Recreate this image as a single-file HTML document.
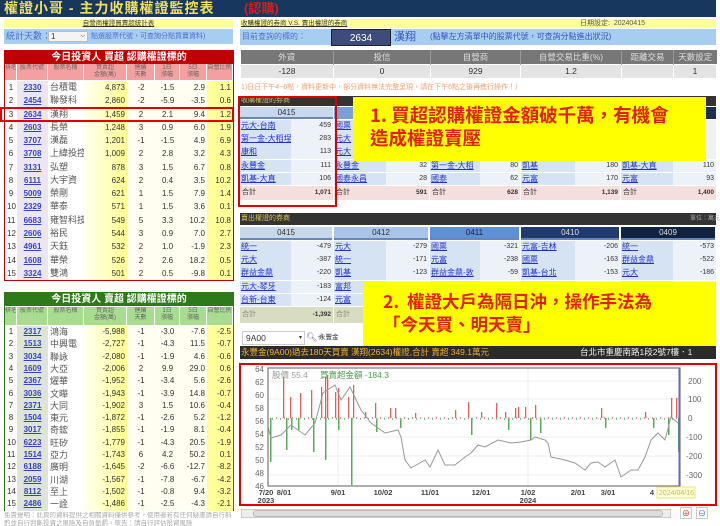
<!DOCTYPE html>
<html><head><meta charset="utf-8">
<style>
*{margin:0;padding:0;box-sizing:border-box}
body{width:720px;height:526px;overflow:hidden;background:#fff;font-family:"Liberation Sans","Noto Sans CJK TC",sans-serif;font-size:8px;color:#333;position:relative}
.a{position:absolute}
.cell{position:absolute;overflow:hidden;white-space:nowrap;font-size:8px;padding:0 2px}
table{border-collapse:collapse;table-layout:fixed}
td{padding:0 2px;white-space:nowrap;overflow:hidden;line-height:12px}
</style></head><body>

<div class="a" style="left:0;top:0;width:716px;height:17px;background:#17375e"></div>
<div class="a" style="left:4px;top:0;font-size:14px;line-height:17px;color:#f0e060;font-weight:bold;letter-spacing:1px">權證小哥 - 主力收購權證監控表</div>
<div class="a" style="left:244px;top:0;font-size:13px;line-height:17px;color:#d02020;font-weight:bold">(認購)</div>

<div class="a" style="left:4px;top:19px;width:229px;height:9px;background:#ffff99;font-size:6.5px;line-height:9px;text-align:center;color:#333;text-decoration:underline">自營商權證買賣超統計表</div>
<div class="a" style="left:4px;top:29px;width:229px;height:15px;background:#a7cef0"></div>
<div class="a" style="left:6px;top:30px;font-size:9px;color:#4a6fd0;line-height:13px">統計天數：</div>
<div class="a" style="left:48px;top:31px;width:40px;height:11px;background:#f4f4f4;border:1px solid #bbb;font-size:8px;line-height:9px;padding-left:2px">1<span style="float:right;padding-right:2px;font-size:6px">⌵</span></div>
<div class="a" style="left:91px;top:31px;font-size:7px;color:#4a6fd0;line-height:11px">點選股票代號，可查詢分點買賣資料)</div>

<div class="a" style="left:4px;top:50px;width:230px;height:231px;border:1px solid #c00000;background:#fff"></div>
<div class="a" style="left:5px;top:51px;width:228px;height:13px;background:#c00000;color:#fff;font-size:10px;line-height:13px;text-align:center;font-weight:bold">今日投資人 買超 認購權證標的</div>
<div id="rt"></div>
<div class="a" style="left:0;top:107px;width:234px;height:15px;border:2px solid #e00000"></div>

<div class="a" style="left:4px;top:292px;width:230px;height:219px;border:1px solid #2e7a1a;background:#fff"></div>
<div class="a" style="left:5px;top:293px;width:228px;height:13px;background:#2e7a1a;color:#fff;font-size:10px;line-height:13px;text-align:center;font-weight:bold">今日投資人 賣超 認購權證標的</div>
<div id="gt"></div>
<div class="a" style="left:4px;top:512px;width:230px;height:14px;overflow:hidden;font-size:6.5px;line-height:7.5px;color:#aaa">免責聲明：此頁的資料提供之相關資料僅供參考，使用者若有任何疑慮請自行斟酌並自行判斷投資之風險及自負盈虧，敬告：請自行評估投資風險</div>

<div class="a" style="left:240px;top:19px;width:476px;height:9px;background:#ffff99"></div>
<div class="a" style="left:241px;top:19px;font-size:6.5px;line-height:9px;text-decoration:underline;color:#333">收購權證的券商 V.S. 賣出權證的券商</div>
<div class="a" style="left:580px;top:19px;font-size:7px;line-height:9px;color:#555">日期設定:&nbsp; 20240415</div>
<div class="a" style="left:240px;top:29px;width:476px;height:16px;background:#a7cef0"></div>
<div class="a" style="left:242px;top:30px;font-size:8px;line-height:13px;color:#4a6fd0">目前查詢的標的：</div>
<div class="a" style="left:331px;top:29px;width:60px;height:17px;background:#3d4c7a;color:#fff;font-size:10px;line-height:17px;text-align:center;border:1px solid #222">2634</div>
<div class="a" style="left:394px;top:29px;font-size:11px;line-height:16px;color:#3355bb">漢翔</div>
<div class="a" style="left:430px;top:30px;font-size:8px;line-height:14px;color:#3355bb">(點擊左方清單中的股票代號，可查詢分點進出狀況)</div>

<table class="a" style="left:240px;top:50px;width:476px;font-size:8.5px;text-align:center">
<colgroup><col style="width:93px"><col style="width:97px"><col style="width:90px"><col style="width:101px"><col style="width:52px"><col style="width:43px"></colgroup>
<tr style="background:#777;color:#ddd"><td style="height:14px;text-align:center;border-right:1px solid #999">外資</td><td style="text-align:center;border-right:1px solid #999">投信</td><td style="text-align:center;border-right:1px solid #999">自營商</td><td style="text-align:center;border-right:1px solid #999">自營交易比重(%)</td><td style="text-align:center;border-right:1px solid #999">距離交易</td><td style="text-align:center">天數設定</td></tr>
<tr style="background:#e4e4e4;color:#333"><td style="height:14px;text-align:center;border:1px solid #fff">-128</td><td style="text-align:center;border:1px solid #fff">0</td><td style="text-align:center;border:1px solid #fff">929</td><td style="text-align:center;border:1px solid #fff">1.2</td><td style="border:1px solid #fff"></td><td style="text-align:center;border:1px solid #fff">1</td></tr>
</table>
<div class="a" style="left:241px;top:83px;font-size:7px;color:#f0a070;line-height:9px">1)日日下午4~6點，資料更新中，部分資料無法完整呈現，請在下午6點之後再進行操作！）</div>

<div class="a" style="left:240px;top:96px;width:476px;height:10px;background:#333"></div>
<div class="a" style="left:241px;top:96px;font-size:7px;line-height:10px;color:#d8c060">收購權證的券商</div>
<div class="a" style="left:240px;top:107px;width:93px;height:12px;background:#c8d8ec;border-bottom:2px solid #6a86b8;text-align:center;font-size:8px;line-height:11px">0415</div>
<div class="a" style="left:334px;top:107px;width:382px;height:12px;background:#7aa0d8"></div>
<div class="a" style="left:700px;top:107px;width:16px;height:12px;background:#1e2e4e"></div>
<div id="buy"></div>
<div class="a" style="left:238px;top:96px;width:99px;height:111px;border:2px solid #e00000"></div>
<div class="a" style="left:353px;top:97px;width:353px;height:64px;background:#ffff00;color:#e02010;font-weight:bold;font-size:18.5px;line-height:23px;padding:7px 0 0 17px;font-family:'Noto Sans CJK TC',sans-serif">1. 買超認購權證金額破千萬，有機會<br>造成權證賣壓</div>

<div class="a" style="left:240px;top:213px;width:476px;height:12px;background:#333"></div>
<div class="a" style="left:241px;top:213px;font-size:7px;line-height:12px;color:#d8c060">賣出權證的券商</div>
<div class="a" style="left:690px;top:213px;font-size:6px;line-height:12px;color:#aaa">單位：萬元</div>
<div id="sell"></div>
<div class="a" style="left:363px;top:282px;width:353px;height:64px;background:#ffff00;color:#e02010;font-weight:bold;font-size:17.5px;line-height:23px;padding:8px 0 0 20px;font-family:'Noto Sans CJK TC',sans-serif">2.&nbsp; 權證大戶為隔日沖，操作手法為<br>「今天買、明天賣」</div>

<div class="a" style="left:242px;top:331px;width:63px;height:14px;border:1px solid #ccc;font-size:8.5px;line-height:12px;padding-left:3px;color:#333">9A00<span style="float:right;font-size:6px;padding-right:2px">▾</span></div>
<div class="a" style="left:306px;top:331px;font-size:9px;line-height:13px;color:#666">🔍︎+</div>
<div class="a" style="left:319px;top:333px;font-size:6.5px;line-height:10px;color:#333">永豐金</div>

<div class="a" style="left:240px;top:346px;width:476px;height:13px;background:#2b2b2b"></div>
<div class="a" style="left:241px;top:346px;font-size:8.5px;line-height:13px;color:#f0b030;white-space:nowrap">永豐金(9A00)過去180天買賣 漢翔(2634)權證,合計 賣超 349.1萬元</div>
<div class="a" style="left:580px;top:346px;font-size:8.5px;line-height:13px;color:#eee;white-space:nowrap;width:136px;overflow:hidden">台北市重慶南路1段2號7樓．1</div>

<div class="a" style="left:239px;top:363px;width:478px;height:143px;border:2px solid #e00000"></div>
<svg class="a" style="left:0;top:0" width="720" height="526" viewBox="0 0 720 526">
<g stroke="#ececec" stroke-width="1">
<line x1="268" y1="381" x2="680" y2="381"/><line x1="268" y1="399" x2="680" y2="399"/><line x1="268" y1="418" x2="680" y2="418"/><line x1="268" y1="437" x2="680" y2="437"/><line x1="268" y1="456" x2="680" y2="456"/><line x1="268" y1="475" x2="680" y2="475"/>
<line x1="338" y1="368" x2="338" y2="486"/><line x1="528" y1="368" x2="528" y2="486"/>
</g>
<g font-family="Liberation Sans,sans-serif" font-size="8" fill="#666" text-anchor="end">
<text x="264" y="372">64</text><text x="264" y="385">62</text><text x="264" y="398">60</text><text x="264" y="411">58</text><text x="264" y="424">56</text><text x="264" y="437">54</text><text x="264" y="450">52</text><text x="264" y="463">50</text><text x="264" y="476">48</text><text x="264" y="489">46</text>
</g>
<g font-family="Liberation Sans,sans-serif" font-size="8" fill="#666">
<text x="688" y="384">200</text><text x="688" y="402">100</text><text x="688" y="421">0</text><text x="686" y="440">-100</text><text x="686" y="459">-200</text><text x="686" y="478">-300</text>
</g>
<g font-family="Liberation Sans,sans-serif" font-size="7.5" fill="#444" font-weight="bold" text-anchor="middle">
<text x="266" y="495">7/20</text><text x="284" y="495">8/01</text><text x="338" y="495">9/01</text><text x="383" y="495">10/02</text><text x="430" y="495">11/01</text><text x="481" y="495">12/01</text><text x="528" y="495">1/02</text><text x="578" y="495">2/01</text><text x="608" y="495">3/01</text><text x="652" y="495">4</text>
<text x="266" y="503">2023</text><text x="528" y="503">2024</text>
</g>
<g id="bars"></g>
<polyline fill="none" stroke="#999" stroke-width="1" points="268,427 271,438 281,435 291,425 305,435 315,423 323,393 335,385 341,400 350,387 361,410 371,423 385,433 398,430 401,437 405,460 411,468 425,460 430,467 438,450 445,465 455,465 465,457 471,453 478,445 485,447 498,440 511,443 521,442 531,440 535,437 545,440 548,443 551,457 565,460 575,463 585,470 591,463 598,462 605,467 615,460 621,477 631,470 638,470 645,457 651,440 658,433 665,440 671,417 678,423"/>
<rect x="268" y="368" width="412" height="118" fill="none" stroke="#777" stroke-width="1.2"/>
<line x1="679" y1="368" x2="679" y2="486" stroke="#6060e0" stroke-width="1"/>
<rect x="657" y="487" width="38" height="11" fill="#ffffd0" stroke="#e8e080"/>
<text x="659" y="495" font-family="Liberation Sans,sans-serif" font-size="7" fill="#c8b870">2024/04/16</text>
<text x="272" y="378" font-family="Liberation Sans,'Noto Sans CJK TC',sans-serif" font-size="8.5" fill="#999">股價 55.4</text>
<text x="320" y="378" font-family="Liberation Sans,'Noto Sans CJK TC',sans-serif" font-size="8.5" fill="#4a9a4a">買賣超金額 -184.3</text>
</svg>
<div class="a" style="left:241px;top:509px;width:430px;height:9px;border:1px solid #ccc;background:#eee"></div>
<div class="a" style="left:253px;top:510px;width:410px;height:7px;background:#dcdcdc;border:1px solid #bbb;border-radius:3px"></div>
<div class="a" style="left:680px;top:507px;width:12px;height:12px;border:1px solid #ccc;color:#d02020;font-size:8px;text-align:center;line-height:11px">⊕</div>
<div class="a" style="left:696px;top:507px;width:12px;height:12px;border:1px solid #ccc;color:#3060d0;font-size:8px;text-align:center;line-height:11px">⊖</div>

<script>
var red=[["1","2330","台積電","4,873","-2","-1.5","2.9","1.1"],["2","2454","聯發科","2,860","-2","-5.9","-3.5","0.6"],["3","2634","漢翔","1,459","2","2.1","9.4","1.2"],["4","2603","長榮","1,248","3","0.9","6.0","1.9"],["5","3707","漢磊","1,201","-1","-1.5","4.9","6.9"],["6","3708","上緯投控","1,009","2","2.8","3.2","4.3"],["7","3131","弘塑","878","3","1.5","6.7","0.8"],["8","6111","大宇資","624","2","0.4","3.5","10.2"],["9","5009","榮剛","621","1","1.5","7.9","1.4"],["10","2329","華泰","571","1","1.5","3.6","0.1"],["11","6683","雍智科技","549","5","3.3","10.2","10.8"],["12","2606","裕民","544","3","0.9","7.0","2.7"],["13","4961","天鈺","532","2","1.0","-1.9","2.3"],["14","1608","華榮","526","2","2.6","18.2","0.5"],["15","3324","雙鴻","501","2","0.5","-9.8","0.1"]];
var grn=[["1","2317","鴻海","-5,988","-1","-3.0","-7.6","-2.5"],["2","1513","中興電","-2,727","-1","-4.3","11.5","-0.7"],["3","3034","聯詠","-2,080","-1","-1.9","4.6","-0.6"],["4","1609","大亞","-2,006","2","9.9","29.0","0.6"],["5","2367","燿華","-1,952","-1","-3.4","5.6","-2.6"],["6","3036","文曄","-1,943","-1","-3.9","14.8","-0.7"],["7","2371","大同","-1,902","3","1.5","10.6","-0.4"],["8","1504","東元","-1,872","-1","-2.6","5.2","-1.2"],["9","3017","奇鋐","-1,855","-1","-1.9","8.1","-0.4"],["10","6223","旺矽","-1,779","-1","-4.3","20.5","-1.9"],["11","1514","亞力","-1,743","6","4.2","50.2","0.1"],["12","6188","廣明","-1,645","-2","-6.6","-12.7","-8.2"],["13","2059","川湖","-1,567","-1","-7.8","-6.7","-4.2"],["14","8112","至上","-1,502","-1","-0.8","9.4","-3.2"],["15","2486","一詮","-1,486","-1","-2.5","-4.3","-2.1"]];
var CX=[5,17,48,84,127,155,180,207,233];
var HD=["排名","股票代號","股票名稱","買賣超<br>金額(萬)","連續<br>天數","1日<br>漲幅","5日<br>漲幅","自營比例"];
function fill(id,d,top,hc,kc,rh,hh){
 var h="",hy=top-hh-1;
 for(var c=0;c<8;c++){h+='<div class="cell" style="left:'+CX[c]+'px;top:'+hy+'px;width:'+(CX[c+1]-CX[c])+'px;height:'+hh+'px;background:'+hc+';border-right:1px solid #fff;font-size:6px;line-height:7px;color:#666;text-align:center;padding:1px 0">'+HD[c]+'</div>';}
 var bg=["#fff",kc,"#fff","linear-gradient(90deg,#fffff0,#ffff90)","#fffef0","#fffef0","#fffef0","#ffff9a"];
 var al=["center","center","left","right","center","center","right","right"];
 d.forEach(function(r,i){var y=top+i*rh;
  for(var c=0;c<8;c++){var st='left:'+CX[c]+'px;top:'+y+'px;width:'+(CX[c+1]-CX[c])+'px;height:'+(rh+0.1)+'px;line-height:'+rh+'px;background:'+bg[c]+';text-align:'+al[c];
   if(c==1)st+=';color:#3344cc;text-decoration:underline;font-weight:bold';
   if(c==2)st+=';font-size:9px;color:#555';
   h+='<div class="cell" style="'+st+'">'+r[c]+'</div>';}
 });
 document.getElementById(id).innerHTML=h;}
fill("rt",red,81,"#f5a0a0","#ece6f2",13.27,16);
fill("gt",grn,326,"#a8dc90","#dfe4d8",12.3,18);
function cols(top,data,xs,ws){var h="";data.forEach(function(c,ci){var x=xs[ci],w=ws[ci];c.forEach(function(r,ri){var y=top+ri*13.2;h+='<div class="a" style="left:'+x+'px;top:'+y+'px;width:'+(w*0.55)+'px;height:12.5px;background:#d6e3f3;font-size:8px;line-height:12px;color:#2233cc;text-decoration:underline;overflow:hidden;white-space:nowrap;padding-left:1px">'+r[0]+'</div><div class="a" style="left:'+(x+w*0.55)+'px;top:'+y+'px;width:'+(w*0.45)+'px;height:12.5px;background:#edf2f9;font-size:7px;line-height:12px;text-align:right;padding-right:2px">'+r[1]+'</div>';});});return h;}
var xs=[240,334,430,521,621],ws=[93,95,90,99,95];
var buy=[[["元大-台南","459"],["第一金-大稻埕","283"],["康和","113"],["永豐金","111"],["凱基-大直","106"]],[["國票",""],["元大",""],["元大",""],["永豐金","32"],["國泰永昌","28"]],[["",""],["",""],["",""],["第一金-大稻","80"],["國泰","62"]],[["",""],["",""],["",""],["凱基","180"],["元富","170"]],[["",""],["",""],["",""],["凱基-大直","110"],["元富","93"]]];
var bh=cols(120,buy,xs,ws);var sums=["1,071","591","628","1,139","1,400"];
xs.forEach(function(x,i){bh+='<div class="a" style="left:'+x+'px;top:186px;width:'+ws[i]+'px;height:14px;background:#f5dede;font-size:7px;line-height:14px;padding:0 2px"><span>合計</span><b style="float:right;font-size:6.5px">'+sums[i]+'</b></div>';});
document.getElementById("buy").innerHTML=bh;
var sh="",dc=["#c8d8ec","#a8c4e8","#5e90d8","#1e3a6e","#0f2240"],dt=["#333","#333","#222","#ddd","#ddd"],dn=["0415","0412","0411","0410","0409"];
xs.forEach(function(x,i){sh+='<div class="a" style="left:'+x+'px;top:227px;width:'+(ws[i]-1)+'px;height:13px;background:'+dc[i]+';color:'+dt[i]+';border-bottom:2px solid #6a86b8;font-size:8px;text-align:center;line-height:12px">'+dn[i]+'</div>';});
var sell=[[["統一","-479"],["元大","-387"],["群益金鼎","-220"],["元大-琴牙","-183"],["台新-台東","-124"]],[["元大","-279"],["統一","-171"],["凱基","-123"],["富邦",""],["元富",""]],[["國票","-321"],["元富","-238"],["群益金鼎-敦","-59"],["",""],["",""]],[["元富-吉林","-206"],["國票","-163"],["凱基-台北","-153"],["",""],["",""]],[["統一","-573"],["群益金鼎","-522"],["元大","-186"],["",""],["",""]]];
sh+=cols(241,sell,xs,ws);
sh+='<div class="a" style="left:240px;top:307px;width:93px;height:16px;background:#d8dcc0;font-size:7px;line-height:16px;padding:0 2px;color:#888">合計<b style="float:right;font-size:6.5px;color:#333">-1,392</b></div>';
sh+='<div class="a" style="left:334px;top:307px;width:30px;height:16px;background:#d8dcc0;font-size:7px;line-height:16px;padding:0 2px;color:#888">合計</div>';
document.getElementById("sell").innerHTML=sh;
var R=[[283,377],[290,397],[300,393],[311,390],[321,387],[325,377],[327,375],[335,392],[338,388],[348,397],[353,385],[365,412],[375,403],[390,408],[395,408],[415,413],[455,410],[468,402],[481,412],[496,403],[505,412],[515,408],[518,407],[525,407],[535,405],[601,408],[645,412],[671,398],[676,398]];
var G=[[270,462],[286,450],[291,430],[298,430],[313,452],[325,460],[338,430],[351,485],[376,432],[400,428],[471,435],[508,430],[530,440],[540,433],[605,428],[653,428],[668,435],[678,452]];
var b="";R.forEach(function(p){b+='<rect x="'+p[0]+'" y="'+p[1]+'" width="1.3" height="'+(418-p[1])+'" fill="#e06060"/>';});
G.forEach(function(p){b+='<rect x="'+p[0]+'" y="418" width="1.5" height="'+(p[1]-418)+'" fill="#5aaa5a"/>';});
for(var x=272;x<678;x+=4){b+='<rect x="'+x+'" y="'+(x%8?417:418)+'" width="1" height="2" fill="'+(x%8?'#e09090':'#80c080')+'"/>';}
document.getElementById("bars").innerHTML=b;
</script>
</body></html>
